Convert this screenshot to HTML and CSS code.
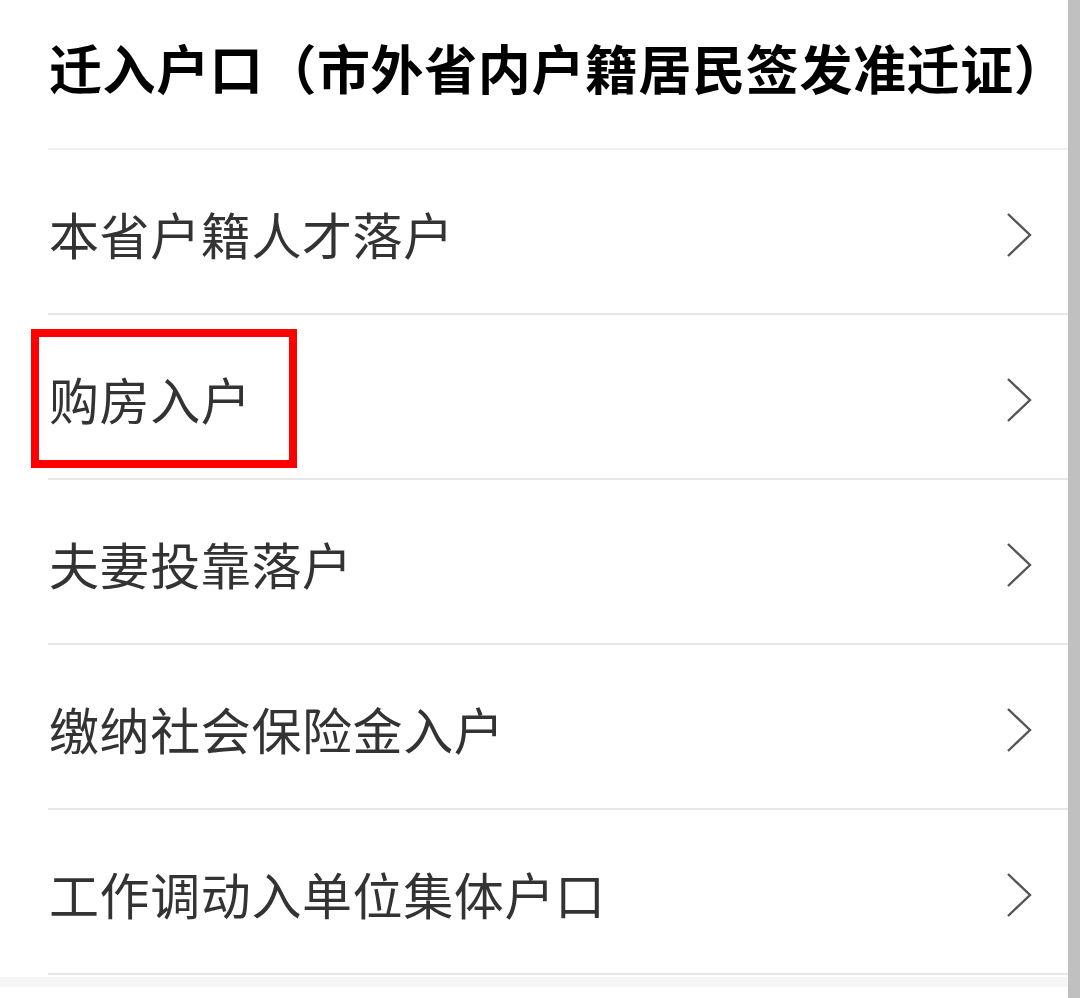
FILE: index.html
```html
<!DOCTYPE html>
<html lang="zh-CN">
<head>
    <meta charset="UTF-8">
    <meta name="viewport" content="width=device-width, initial-scale=1.0">
    <title>迁入户口</title>
    <link rel="stylesheet" href="styles.css">
</head>
<body>
    <div class="page">
        <main class="content">
            <h1 class="title">迁入户口（市外省内户籍居民签发准迁证）</h1>

            <ul class="menu">
                <li class="menu-item">
                    <span class="label">本省户籍人才落户</span>
                    <svg class="chevron" viewBox="0 0 26 46"><path d="M2 2 L24 23 L2 44"/></svg>
                </li>
                <li class="menu-item">
                    <span class="label">购房入户</span>
                    <svg class="chevron" viewBox="0 0 26 46"><path d="M2 2 L24 23 L2 44"/></svg>
                    <!-- highlight box -->
                    <div class="highlight"></div>
                </li>
                <li class="menu-item">
                    <span class="label">夫妻投靠落户</span>
                    <svg class="chevron" viewBox="0 0 26 46"><path d="M2 2 L24 23 L2 44"/></svg>
                </li>
                <li class="menu-item">
                    <span class="label">缴纳社会保险金入户</span>
                    <svg class="chevron" viewBox="0 0 26 46"><path d="M2 2 L24 23 L2 44"/></svg>
                </li>
                <li class="menu-item">
                    <span class="label">工作调动入单位集体户口</span>
                    <svg class="chevron" viewBox="0 0 26 46"><path d="M2 2 L24 23 L2 44"/></svg>
                </li>
            </ul>
            <div class="bottom-strip"></div>
        </main>
        <div class="scrollbar"></div>
    </div>
</body>
</html>
```

FILE: styles.css
```css
body {
    margin: 0;
    background: #fff;
    font-family: "Noto Sans CJK SC", "Noto Sans", sans-serif;
}

.page {
    display: flex;
    height: 998px;
    overflow: hidden;
}

.content {
    flex: 1;
}

.title {
    margin: 0 0 0 48px;
    height: 150px;
    box-sizing: border-box;
    padding: 0 0 14px 1px;
    display: flex;
    align-items: center;
    font-size: 53px;
    font-weight: bold;
    color: #000;
    letter-spacing: 0.6px;
    white-space: nowrap;
    border-bottom: 2px solid #f0f0f0;
}

.menu {
    list-style: none;
    margin: 0 0 0 48px;
    padding: 0;
}

.menu-item {
    position: relative;
    height: 165px;
    box-sizing: border-box;
    display: flex;
    align-items: center;
    justify-content: space-between;
    padding: 2px 36px 0 1px;
    border-bottom: 2px solid #e6e6e6;
}

.label {
    font-size: 50px;
    color: #333;
    letter-spacing: 0.6px;
}

.chevron {
    width: 26px;
    height: 46px;
    margin-top: 4px;
    fill: none;
    stroke: #555;
    stroke-width: 2.4;
}

.highlight {
    position: absolute;
    left: -17px;
    top: 14px;
    width: 266px;
    height: 139px;
    border: 8px solid #f00;
    box-sizing: border-box;
}

.bottom-strip {
    height: 10px;
    margin-top: 2px;
    background: #f6f6f6;
}

.scrollbar {
    width: 12px;
    background: #c0c0c0;
}
```
